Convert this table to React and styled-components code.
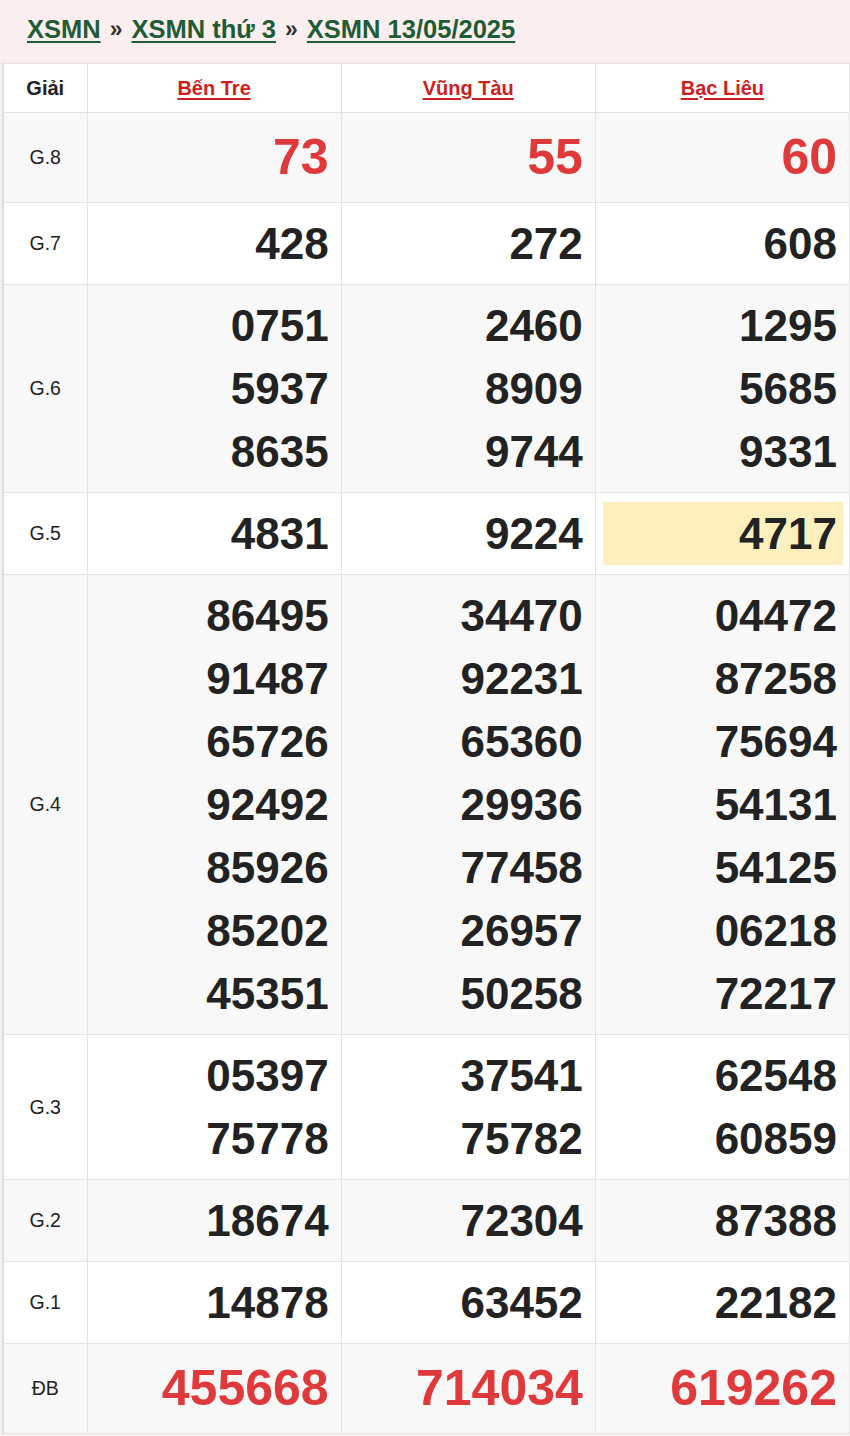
import React from 'react';
import styled, { createGlobalStyle } from 'styled-components';

const GlobalStyle = createGlobalStyle`
	body {
		margin: 0;
		background: #ffffff;
		font-family: 'Liberation Sans', Arial, sans-serif;
	}
`;

const provinces = ['Bến Tre', 'Vũng Tàu', 'Bạc Liêu'];

const rows = [
	{ label: 'G.8', big: true, red: true, values: [['73'], ['55'], ['60']] },
	{ label: 'G.7', values: [['428'], ['272'], ['608']] },
	{
		label: 'G.6',
		values: [
			['0751', '5937', '8635'],
			['2460', '8909', '9744'],
			['1295', '5685', '9331']
		]
	},
	{ label: 'G.5', values: [['4831'], ['9224'], ['4717']], mark: 2 },
	{
		label: 'G.4',
		values: [
			['86495', '91487', '65726', '92492', '85926', '85202', '45351'],
			['34470', '92231', '65360', '29936', '77458', '26957', '50258'],
			['04472', '87258', '75694', '54131', '54125', '06218', '72217']
		]
	},
	{
		label: 'G.3',
		values: [
			['05397', '75778'],
			['37541', '75782'],
			['62548', '60859']
		]
	},
	{ label: 'G.2', values: [['18674'], ['72304'], ['87388']] },
	{ label: 'G.1', values: [['14878'], ['63452'], ['22182']] },
	{ label: 'ĐB', big: true, red: true, values: [['455668'], ['714034'], ['619262']] }
];

export default function App() {
	return (
		<Page>
			<GlobalStyle />
			<Crumbs>
				<Crumb href="#">XSMN</Crumb>
				<Sep>»</Sep>
				<Crumb href="#">XSMN thứ 3</Crumb>
				<Sep>»</Sep>
				<Crumb href="#">XSMN 13/05/2025</Crumb>
			</Crumbs>
			<Table>
				<colgroup>
					<col style={{ width: 84 }} />
					<col />
					<col />
					<col />
				</colgroup>
				<thead>
					<tr>
						<HeadCell>Giải</HeadCell>
						{provinces.map((p) => (
							<HeadCell key={p}>
								<Province href="#">{p}</Province>
							</HeadCell>
						))}
					</tr>
				</thead>
				<tbody>
					{rows.map((row, i) => (
						<Row key={row.label} $shaded={i % 2 === 0}>
							<Label>{row.label}</Label>
							{row.values.map((nums, j) => (
								<NumCell key={j} $mark={row.mark === j}>
									<NumBox $mark={row.mark === j}>
										{nums.map((n) => (
											<Num key={n} $big={row.big} $red={row.red}>
												{n}
											</Num>
										))}
									</NumBox>
								</NumCell>
							))}
						</Row>
					))}
				</tbody>
			</Table>
		</Page>
	);
}

const Page = styled.div`
	width: 850px;
	background: #fbeeee;
	padding-bottom: 4px;
`;
const Crumbs = styled.div`
	height: 63px;
	display: flex;
	align-items: center;
	padding: 0 0 4px 27px;
	box-sizing: border-box;
	gap: 9px;
`;
const Crumb = styled.a`
	color: #1e5c36;
	font-weight: bold;
	font-size: 25.5px;
	text-decoration: underline;
	text-underline-offset: 3px;
`;
const Sep = styled.span`
	color: #333;
	font-weight: bold;
	font-size: 23px;
`;
const Table = styled.table`
	width: 848px;
	margin-left: 2px;
	border-collapse: collapse;
	table-layout: fixed;
	background: #fff;
	border-left: 2px solid #dedede;
	border-right: 1px solid #e4e4e4;
`;
const HeadCell = styled.th`
	height: 48px;
	padding: 0;
	border: 1px solid #e4e4e4;
	font-size: 20px;
	font-weight: bold;
	color: #222;
	text-align: center;
	background: #fff;
`;
const Province = styled.a`
	color: #d01e1e;
	text-decoration: underline;
	text-underline-offset: 3px;
`;
const Row = styled.tr`
	background: ${(p) => (p.$shaded ? '#f8f8f8' : '#ffffff')};
`;
const Label = styled.td`
	border: 1px solid #e4e4e4;
	text-align: center;
	font-size: 19.5px;
	color: #222;
	padding: 0;
`;
const NumCell = styled.td`
	border: 1px solid #e4e4e4;
	padding: ${(p) => (p.$mark ? '9px 6px 9px 7px' : '9px 12px 9px 8px')};
	text-align: right;
	vertical-align: middle;
`;
const NumBox = styled.div`
	background: ${(p) => (p.$mark ? '#fdf0be' : 'transparent')};
	padding-right: ${(p) => (p.$mark ? '6px' : '0')};
`;
const Num = styled.div`
	font-weight: bold;
	font-size: ${(p) => (p.$big ? '50px' : '44px')};
	line-height: ${(p) => (p.$big ? '71px' : '63px')};
	color: ${(p) => (p.$red ? '#e0393b' : '#222')};
`;
